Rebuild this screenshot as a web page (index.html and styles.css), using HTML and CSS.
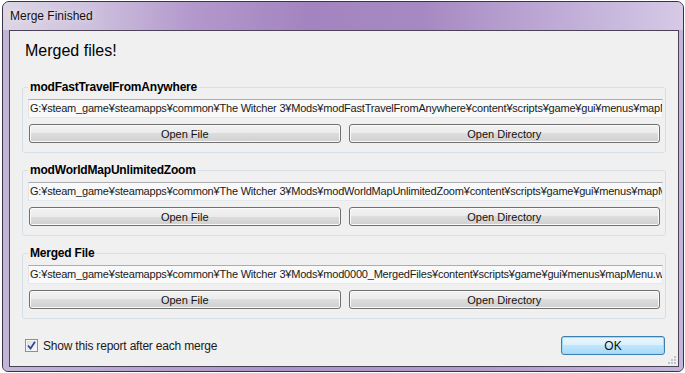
FILE: index.html
```html
<!DOCTYPE html>
<html lang="en">
<head>
    <meta charset="UTF-8">
    <title>Merge Finished</title>
    <link rel="stylesheet" href="styles.css">
</head>
<body>

<div class="window">
    <div class="titlebar"><span class="title">Merge Finished</span></div>
    <div class="frame">
        <div class="client">
            <h1 class="heading">Merged files!</h1>

            <fieldset class="group">
                <legend>modFastTravelFromAnywhere</legend>
                <div class="path">G:¥steam_game¥steamapps¥common¥The Witcher 3¥Mods¥modFastTravelFromAnywhere¥content¥scripts¥game¥gui¥menus¥mapMenu.ws</div>
                <div class="actions">
                    <button class="btn">Open File</button>
                    <button class="btn">Open Directory</button>
                </div>
            </fieldset>

            <fieldset class="group">
                <legend>modWorldMapUnlimitedZoom</legend>
                <div class="path">G:¥steam_game¥steamapps¥common¥The Witcher 3¥Mods¥modWorldMapUnlimitedZoom¥content¥scripts¥game¥gui¥menus¥mapMenu.ws</div>
                <div class="actions">
                    <button class="btn">Open File</button>
                    <button class="btn">Open Directory</button>
                </div>
            </fieldset>

            <fieldset class="group">
                <legend>Merged File</legend>
                <div class="path">G:¥steam_game¥steamapps¥common¥The Witcher 3¥Mods¥mod0000_MergedFiles¥content¥scripts¥game¥gui¥menus¥mapMenu.ws</div>
                <div class="actions">
                    <button class="btn">Open File</button>
                    <button class="btn">Open Directory</button>
                </div>
            </fieldset>

            <div class="footer">
                <label class="check">
                    <span class="box">
                        <svg width="9" height="9" viewBox="0 0 9 9"><path d="M1 4.5 L3.5 7.5 L8 0.8" fill="none" stroke="#2a4a9a" stroke-width="1.8"/></svg>
                    </span>
                    Show this report after each merge
                </label>
                <button class="btn ok">OK</button>
            </div>

            <svg class="grip" width="10" height="10" viewBox="0 0 10 10">
                <rect x="7" y="1" width="2" height="2" fill="#c4c4c4"/>
                <rect x="4" y="4" width="2" height="2" fill="#c4c4c4"/>
                <rect x="7" y="4" width="2" height="2" fill="#c4c4c4"/>
                <rect x="1" y="7" width="2" height="2" fill="#c4c4c4"/>
                <rect x="4" y="7" width="2" height="2" fill="#c4c4c4"/>
                <rect x="7" y="7" width="2" height="2" fill="#c4c4c4"/>
            </svg>
        </div>
    </div>
</div>

</body>
</html>
```

FILE: styles.css
```css
body {
    margin: 0;
    background: #ffffff;
    font-family: 'Liberation Sans', Arial, sans-serif;
    font-size: 12px;
    color: #000;
}

/* Window frame */
.window {
    margin: 1px 1px 0 2px;
    width: 682px;
    height: 371px;
    box-sizing: border-box;
    border: 1px solid #3b3148;
    border-radius: 7px 7px 6px 6px;
    background: #b8a8d0;
    display: flex;
    flex-direction: column;
    overflow: hidden;
}
.titlebar {
    height: 28px;
    line-height: 28px;
    padding-left: 7px;
    background: linear-gradient(to right, #dcd6e4 0%, #cfc3de 12%, #b398cc 28%, #a384c0 45%, #a689c2 62%, #bba5d3 78%, #cbbcdf 92%, #d6cae6 100%);
}
.title { color: #111; text-shadow: 0 0 6px rgba(255,255,255,0.8); }

.frame {
    flex: 1;
    display: flex;
    padding: 0 4px 4px 6px;
    background: linear-gradient(to right, #c2b6d6, #ab95c8 40%, #b09cc9 70%, #c4b6da);
}
.client {
    flex: 1;
    min-width: 0;
    position: relative;
    border: 1px solid #4c4258;
    background: #f0f0f0;
}

.heading {
    margin: 0;
    padding: 10px 0 0 15px;
    font-size: 16px;
    line-height: 20px;
    font-weight: normal;
}

/* Group boxes */
.group {
    margin: 19px 12px 0 12px;
    padding: 5px 2px 9px 5px;
    border: 1px solid #d5dfe5;
    border-radius: 3px;
    min-width: 0;
}
.group + .group { margin-top: 10px; }
.group legend {
    padding: 0 2px;
    font-weight: bold;
    line-height: 14px;
    letter-spacing: -0.2px;
}

.path {
    height: 17px;
    line-height: 17px;
    padding: 0 1px;
    border: 1px solid;
    border-color: #abadb3 #e3e9ef #e3e9ef #e2e3ea;
    background: #f9f9f9;
    font-size: 11px;
    letter-spacing: -0.2px;
    color: #1a1a1a;
    white-space: nowrap;
    overflow: hidden;
}

.actions {
    display: flex;
    gap: 8px;
    margin: 6px 3px 0 1px;
}

/* Buttons */
.btn {
    flex: 1;
    height: 19px;
    padding: 0;
    font-family: inherit;
    font-size: 11px;
    color: #111;
    border: 1px solid #707070;
    border-radius: 3px;
    background: linear-gradient(#f2f2f2 0%, #ebebeb 50%, #dddddd 50%, #cfcfcf 100%);
    box-shadow: inset 0 0 0 1px #fbfbfb;
}
.ok {
    flex: none;
    width: 104px;
    font-size: 12px;
    border-color: #3c7fb1;
    background: linear-gradient(#eaf6fd 0%, #d9f0fc 50%, #bee6fd 50%, #a7d9f5 100%);
    box-shadow: inset 0 0 0 1px #9ddcf7;
}

/* Footer */
.footer {
    display: flex;
    align-items: center;
    justify-content: space-between;
    margin-top: 17px;
    padding: 0 13px 0 15px;
}
.check {
    display: flex;
    align-items: center;
    gap: 5px;
    color: #1a1a1a;
    letter-spacing: -0.2px;
}
.box {
    width: 11px;
    height: 11px;
    border: 1px solid #8e8f8f;
    background: linear-gradient(135deg, #dcdcdc, #fbfbfb);
    box-shadow: inset 0 0 0 1px #f4f4f4;
    display: flex;
    align-items: center;
    justify-content: center;
}

.grip { position: absolute; right: 1px; bottom: 1px; }
```
